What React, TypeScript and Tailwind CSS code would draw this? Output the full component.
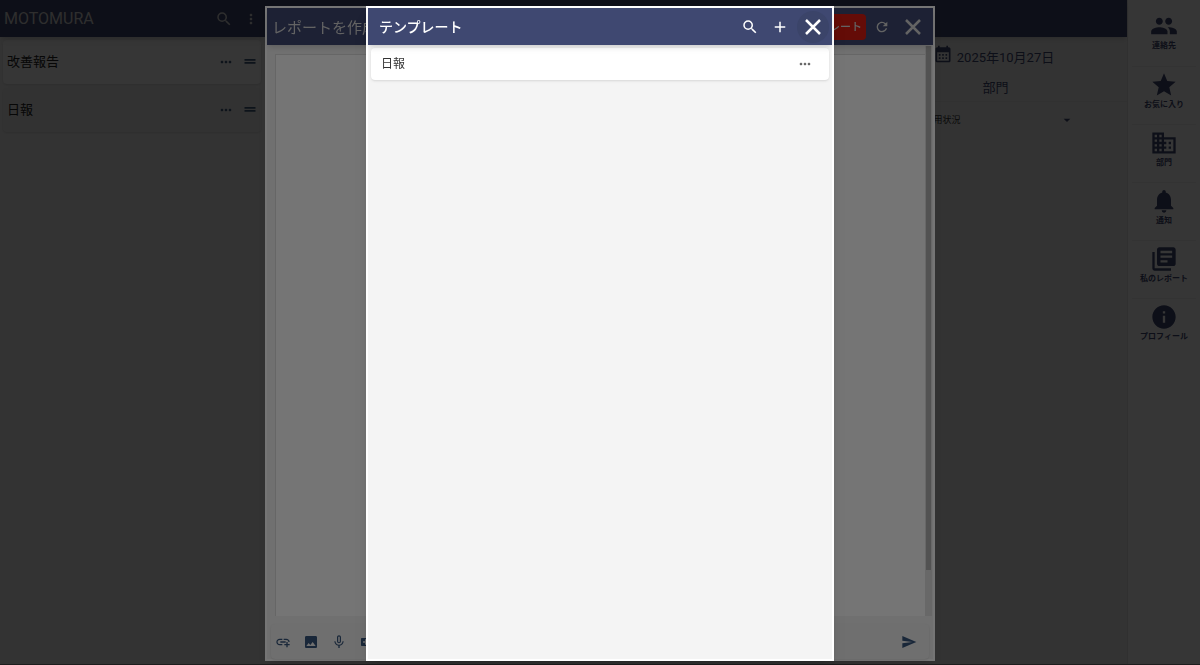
import React from 'react';
import {
  MdAdd,
  MdAddLink,
  MdArrowDropDown,
  MdBusiness,
  MdCalendarMonth,
  MdImage,
  MdInfo,
  MdLibraryBooks,
  MdMicNone,
  MdMoreHoriz,
  MdMoreVert,
  MdNotifications,
  MdPeople,
  MdRefresh,
  MdSearch,
  MdSend,
  MdStar,
  MdVideoCall,
} from 'react-icons/md';

const REPORT_TYPES = [
  { name: '改善報告', selected: false },
  { name: '日報', selected: true },
];

const TEMPLATES = ['日報'];

const NAV_ITEMS = [
  { label: '連絡先', icon: MdPeople },
  { label: 'お気に入り', icon: MdStar },
  { label: '部門', icon: MdBusiness },
  { label: '通知', icon: MdNotifications },
  { label: '私のレポート', icon: MdLibraryBooks },
  { label: 'プロフィール', icon: MdInfo },
];

const CloseIcon = () => (
  <svg className="w-4 h-4" fill="none" stroke="currentColor" viewBox="0 0 16 16">
    <path strokeWidth="2.5" d="M1 1l14 14M15 1L1 15" />
  </svg>
);

const DragIcon = () => (
  <svg className="w-4 h-4" fill="currentColor" viewBox="0 0 16 16">
    <path d="M2.5 5h11v1.7h-11zM2.5 8h11v1.7h-11z" />
  </svg>
);

const ReportList = () => (
  <section className="w-[265px] shrink-0 flex flex-col">
    <header className="relative h-[37px] shrink-0 flex items-center pl-1 pr-1.5 bg-[#3f4871] text-[#d8d8d8] shadow-md">
      <h1 className="flex-1 text-base leading-6">MOTOMURA</h1>
      <button aria-label="検索" className="mr-2.5"><MdSearch className="w-[18px] h-[18px]" /></button>
      <button aria-label="メニュー"><MdMoreVert className="w-4 h-4" /></button>
    </header>
    <ul className="pt-[3px] pl-[3px] pr-1 flex flex-col gap-1">
      {REPORT_TYPES.map((type) => (
        <li
          key={type.name}
          className={`h-11 flex items-center pl-1 pr-[3px] rounded-sm shadow-sm ${type.selected ? 'bg-[#ececec]' : 'bg-[#fcfcfc]'}`}
        >
          <span className="flex-1 text-[13px] text-[#222]">{type.name}</span>
          <button aria-label="その他" className="mr-2 text-[#3f5a7d]"><MdMoreHoriz className="w-4 h-4" /></button>
          <button aria-label="並べ替え" className="text-[#3f5a7d]"><DragIcon /></button>
        </li>
      ))}
    </ul>
  </section>
);

const DatePanel = () => (
  <section className="w-[263px] shrink-0 flex flex-col text-[#3f4871]">
    <div className="flex justify-center items-center gap-1 pr-1 pt-0.5 h-10">
      <MdCalendarMonth className="w-5 h-5 -mt-2" />
      <span className="text-[13px]">2025年10月27日</span>
    </div>
    <div className="h-[22px] flex items-center justify-center text-[13px]">部門</div>
    <div className="mt-0.5 border-t border-[#e8e8e8] flex justify-center">
      <label className="relative mt-3 flex items-center">
        <select aria-label="使用状況" className="w-[158px] h-3 appearance-none bg-transparent pl-2 text-[9px] leading-3 text-[#333]">
          <option>使用状況</option>
        </select>
        <MdArrowDropDown className="absolute right-0 w-4 h-4 pointer-events-none" />
      </label>
    </div>
  </section>
);

const SideNav = () => (
  <nav className="w-[73px] shrink-0 bg-white border-l border-[#e2e2e2] px-1 pt-2">
    {NAV_ITEMS.map(({ label, icon: Icon }, index) => (
      <a
        key={label}
        href="#"
        className={`h-[58px] flex flex-col items-center pt-1 text-[#3f4871] ${index > 0 ? 'border-t border-[#f2f2f2]' : ''}`}
      >
        <Icon className="w-7 h-7" />
        <span className="text-[8px] leading-3 font-bold whitespace-nowrap">{label}</span>
      </a>
    ))}
  </nav>
);

const ReportDialog = () => (
  <div role="dialog" aria-label="レポートを作成" className="w-full max-w-[670px] h-full flex flex-col border-2 border-white bg-[#f4f4f4] shadow-lg">
    <header className="relative h-[37px] shrink-0 flex items-center pl-[5px] pr-3 bg-[#3f4871] text-[#d8d8d8] shadow-md">
      <h2 className="flex-1 pt-[3px] text-[15px] leading-6">レポートを作成</h2>
      <button className="h-[26px] px-1 pt-1 mr-2 rounded-sm bg-[#d91c10] text-[11px] font-medium">テンプレート</button>
      <button aria-label="更新" className="mr-[15px]"><MdRefresh className="w-4 h-4" /></button>
      <button aria-label="閉じる"><CloseIcon /></button>
    </header>
    <div className="flex-1 min-h-0 flex pl-2 pr-px pt-[9px]">
      <textarea aria-label="本文" className="flex-1 resize-none bg-white border-l border-t border-[#dedede]" />
      <div className="w-[7px] -mt-2 pr-px bg-[#e2e2e2]">
        <div className="h-[92%] ml-px bg-[#b4b4b4]" />
      </div>
    </div>
    <footer className="h-[35px] shrink-0 mt-2 mx-1 flex items-center gap-3 px-1 rounded-sm bg-[#f1f1f1] text-[#38567c] shadow-sm">
      <button aria-label="リンク"><MdAddLink className="w-4 h-4" /></button>
      <button aria-label="画像"><MdImage className="w-4 h-4" /></button>
      <button aria-label="音声"><MdMicNone className="w-4 h-4" /></button>
      <button aria-label="動画"><MdVideoCall className="w-4 h-4" /></button>
      <button aria-label="送信" className="ml-auto mr-2"><MdSend className="w-4 h-4" /></button>
    </footer>
  </div>
);

const TemplateDialog = () => (
  <div role="dialog" aria-label="テンプレート" className="w-full max-w-[468px] h-full flex flex-col border-2 border-white bg-[#f4f4f4] shadow-lg">
    <header className="relative h-[37px] shrink-0 flex items-center pl-[11px] pr-[3px] bg-[#3f4871] text-white shadow-md">
      <h2 className="flex-1 text-sm font-medium">テンプレート</h2>
      <button aria-label="検索" className="mr-3"><MdSearch className="w-[18px] h-[18px]" /></button>
      <button aria-label="追加" className="mr-2"><MdAdd className="w-[18px] h-[18px]" /></button>
      <button aria-label="閉じる" className="w-8 h-8 flex items-center justify-center rounded-full bg-[#3b4469]">
        <CloseIcon />
      </button>
    </header>
    <ul className="pt-[3px] px-[3px]">
      {TEMPLATES.map((name) => (
        <li key={name} className="h-8 flex items-center pl-2.5 pr-4 rounded-sm bg-white shadow-sm">
          <span className="flex-1 text-xs text-[#333]">{name}</span>
          <button aria-label="その他" className="text-[#666]"><MdMoreHoriz className="w-4 h-4" /></button>
        </li>
      ))}
    </ul>
  </div>
);

const App: React.FC = () => {
  return (
    <div className="min-h-screen flex bg-[#f1f1f1] border-b border-[#888] font-[Roboto,'Noto_Sans_CJK_JP',sans-serif]">
      <ReportList />
      <main className="flex-1 flex flex-col">
        <div className="relative h-[37px] shrink-0 bg-[#3f4871] shadow-md" />
        <div className="flex justify-end">
          <DatePanel />
        </div>
      </main>
      <SideNav />

      <div className="fixed inset-0 flex justify-center pt-1.5 pb-1 bg-black/54">
        <ReportDialog />
      </div>
      <div className="fixed inset-0 flex justify-center pt-1.5 pb-1 bg-black/54">
        <TemplateDialog />
      </div>
    </div>
  );
};

export default App;
